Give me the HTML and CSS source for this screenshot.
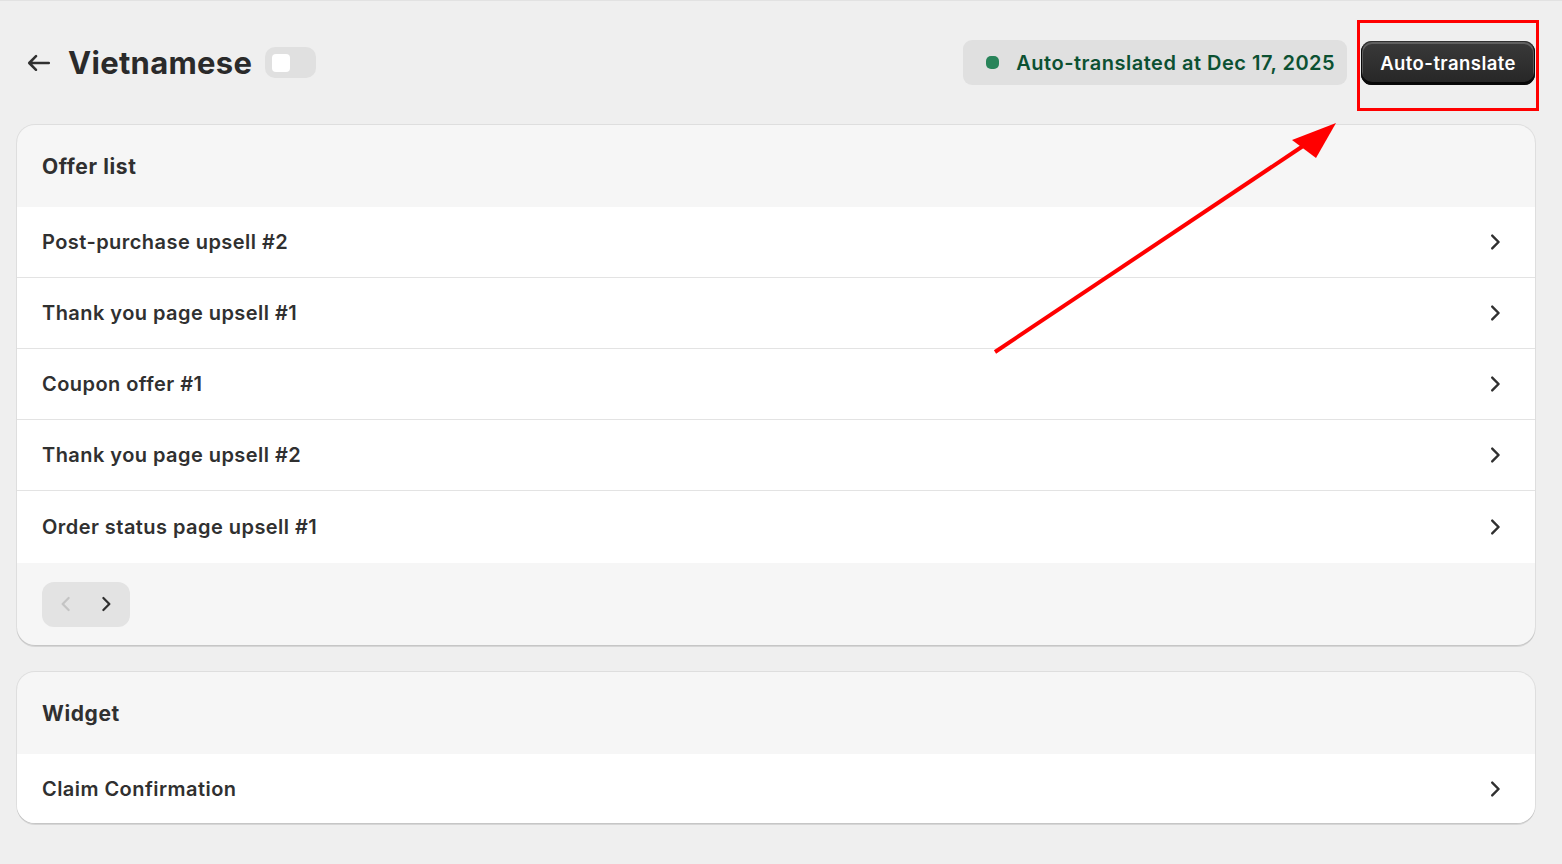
FILE: index.html
```html
<!DOCTYPE html>
<html lang="en">
<head>
  <meta charset="UTF-8">
  <title>Vietnamese - Translations</title>
  <link rel="stylesheet" href="styles.css">
</head>
<body>

<div class="page">
  <div class="page-header">
    <div class="title-wrap">
      <button class="back-btn" aria-label="Back">
        <svg viewBox="0 0 20 20" width="34" height="34"><path fill="#303030" d="M16.5 10a.75.75 0 0 1-.75.75h-9.69l2.72 2.72a.75.75 0 0 1-1.06 1.06l-4-4a.75.75 0 0 1 0-1.06l4-4a.75.75 0 1 1 1.06 1.06l-2.72 2.72h9.69a.75.75 0 0 1 .75.75Z"/></svg>
      </button>
      <h1 class="page-title">Vietnamese</h1>
      <span class="toggle"><span class="toggle-knob"></span></span>
    </div>
    <div class="actions">
      <span class="status-badge"><span class="status-dot"></span>Auto-translated at Dec 17, 2025</span>
      <span class="highlight">
        <button class="primary-btn">Auto-translate</button>
      </span>
    </div>
  </div>

  <div class="card">
    <div class="card-head">Offer list</div>
    <div class="row-list">
      <div class="row"><span>Post-purchase upsell #2</span><svg class="chev" viewBox="0 0 20 20"><path d="M7.72 14.53a.75.75 0 0 1 0-1.06l3.47-3.47-3.47-3.47a.75.75 0 0 1 1.06-1.06l4 4a.75.75 0 0 1 0 1.06l-4 4a.75.75 0 0 1-1.06 0Z"/></svg></div>
      <div class="row"><span>Thank you page upsell #1</span><svg class="chev" viewBox="0 0 20 20"><path d="M7.72 14.53a.75.75 0 0 1 0-1.06l3.47-3.47-3.47-3.47a.75.75 0 0 1 1.06-1.06l4 4a.75.75 0 0 1 0 1.06l-4 4a.75.75 0 0 1-1.06 0Z"/></svg></div>
      <div class="row"><span>Coupon offer #1</span><svg class="chev" viewBox="0 0 20 20"><path d="M7.72 14.53a.75.75 0 0 1 0-1.06l3.47-3.47-3.47-3.47a.75.75 0 0 1 1.06-1.06l4 4a.75.75 0 0 1 0 1.06l-4 4a.75.75 0 0 1-1.06 0Z"/></svg></div>
      <div class="row"><span>Thank you page upsell #2</span><svg class="chev" viewBox="0 0 20 20"><path d="M7.72 14.53a.75.75 0 0 1 0-1.06l3.47-3.47-3.47-3.47a.75.75 0 0 1 1.06-1.06l4 4a.75.75 0 0 1 0 1.06l-4 4a.75.75 0 0 1-1.06 0Z"/></svg></div>
      <div class="row"><span>Order status page upsell #1</span><svg class="chev" viewBox="0 0 20 20"><path d="M7.72 14.53a.75.75 0 0 1 0-1.06l3.47-3.47-3.47-3.47a.75.75 0 0 1 1.06-1.06l4 4a.75.75 0 0 1 0 1.06l-4 4a.75.75 0 0 1-1.06 0Z"/></svg></div>
    </div>
    <div class="card-foot">
      <div class="pager">
        <svg class="pager-icon disabled" viewBox="0 0 20 20"><path d="M12.28 5.47a.75.75 0 0 1 0 1.06l-3.47 3.47 3.47 3.47a.75.75 0 1 1-1.06 1.06l-4-4a.75.75 0 0 1 0-1.06l4-4a.75.75 0 0 1 1.06 0Z"/></svg>
        <svg class="pager-icon" viewBox="0 0 20 20"><path d="M7.72 14.53a.75.75 0 0 1 0-1.06l3.47-3.47-3.47-3.47a.75.75 0 0 1 1.06-1.06l4 4a.75.75 0 0 1 0 1.06l-4 4a.75.75 0 0 1-1.06 0Z"/></svg>
      </div>
    </div>
  </div>

  <div class="card">
    <div class="card-head">Widget</div>
    <div class="row-list">
      <div class="row"><span>Claim Confirmation</span><svg class="chev" viewBox="0 0 20 20"><path d="M7.72 14.53a.75.75 0 0 1 0-1.06l3.47-3.47-3.47-3.47a.75.75 0 0 1 1.06-1.06l4 4a.75.75 0 0 1 0 1.06l-4 4a.75.75 0 0 1-1.06 0Z"/></svg></div>
    </div>
  </div>
</div>

<!-- annotation arrow drawn over the page -->
<svg class="annotation" width="1562" height="864" viewBox="0 0 1562 864">
  <line x1="995" y1="352" x2="1306" y2="144" stroke="#ff0000" stroke-width="4"/>
  <polygon points="1336,123 1292,140 1316,158" fill="#ff0000"/>
</svg>

</body>
</html>
```

FILE: styles.css
```css
body {
  margin: 0;
  background: #efefef;
  font-family: Inter, "Noto Sans", sans-serif;
  color: #303030;
  border-top: 1px solid #e2e2e2;
}
.page {
  padding: 39px 27px 40px 17px;
}
.page-header {
  display: flex;
  align-items: center;
  justify-content: space-between;
  height: 45px;
  margin-bottom: 40px;
}
.title-wrap {
  display: flex;
  align-items: center;
}
.back-btn {
  border: 0;
  background: none;
  padding: 0;
  margin-left: 5px;
  margin-right: 12px;
  width: 34px;
  height: 34px;
  display: flex;
}
.page-title {
  margin: 0;
  font-size: 31px;
  font-weight: 700;
  letter-spacing: 0.3px;
  color: #2a2a2a;
}
.toggle {
  margin-left: 13px;
  width: 51px;
  height: 31px;
  border-radius: 10px;
  background: #e0e0e0;
  display: flex;
  align-items: center;
  padding-left: 7px;
  box-sizing: border-box;
}
.toggle-knob {
  width: 18px;
  height: 18px;
  border-radius: 4px;
  background: #fff;
}
.actions {
  display: flex;
  align-items: center;
  gap: 14px;
}
.status-badge {
  display: flex;
  align-items: center;
  height: 45px;
  padding: 0 12px 0 23px;
  background: #e0e0e0;
  border-radius: 9px;
  color: #0c5132;
  font-size: 20px;
  font-weight: 600;
  letter-spacing: 0.5px;
}
.status-dot {
  width: 13px;
  height: 13px;
  border-radius: 5px;
  background: #29845a;
  margin-right: 17px;
}
.highlight {
  position: relative;
  display: flex;
}
.highlight::after {
  content: "";
  position: absolute;
  left: -4px;
  top: -21px;
  right: -4px;
  bottom: -26px;
  border: 3px solid #ff0000;
}
.primary-btn {
  height: 44px;
  padding: 0 19px;
  border: 0;
  border-radius: 11px;
  background: linear-gradient(#3a3a3a, #262626);
  color: #fff;
  font-family: Inter, sans-serif;
  font-size: 18.5px;
  font-weight: 600;
  letter-spacing: 0.45px;
  box-shadow: inset 0 -2px 0 1px rgba(0,0,0,0.8), inset 0 0 0 1px #303030, inset 0 1px 0 2px rgba(255,255,255,0.2);
}
.card {
  background: #f6f6f6;
  border-radius: 18px;
  overflow: hidden;
  box-shadow: 0 0 0 1px rgba(0,0,0,0.07), 0 2px 0 rgba(0,0,0,0.1);
  margin-bottom: 27px;
}
.card-head {
  height: 82px;
  display: flex;
  align-items: center;
  padding: 0 25px;
  font-size: 21px;
  font-weight: 700;
  letter-spacing: 0.6px;
}
.row {
  height: 71px;
  display: flex;
  align-items: center;
  justify-content: space-between;
  padding: 0 24px 0 25px;
  background: #fff;
  font-size: 20px;
  font-weight: 600;
  letter-spacing: 0.45px;
  border-bottom: 1px solid #e3e3e3;
  box-sizing: border-box;
}
.row:last-child {
  border-bottom: 0;
  height: 72px;
}
.card:last-child .row:last-child {
  height: 69px;
}
.chev {
  width: 32px;
  height: 32px;
  fill: #303030;
}
.card-foot {
  height: 82px;
  display: flex;
  align-items: center;
  padding: 0 25px;
}
.pager {
  display: flex;
  align-items: center;
  justify-content: space-around;
  width: 88px;
  height: 45px;
  background: #e3e3e3;
  border-radius: 12px;
  padding: 0 4px;
  box-sizing: border-box;
}
.pager-icon {
  width: 30px;
  height: 30px;
  fill: #303030;
}
.pager-icon.disabled {
  fill: #c4c4c4;
}
.annotation {
  position: absolute;
  left: 0;
  top: 0;
  pointer-events: none;
}
```
